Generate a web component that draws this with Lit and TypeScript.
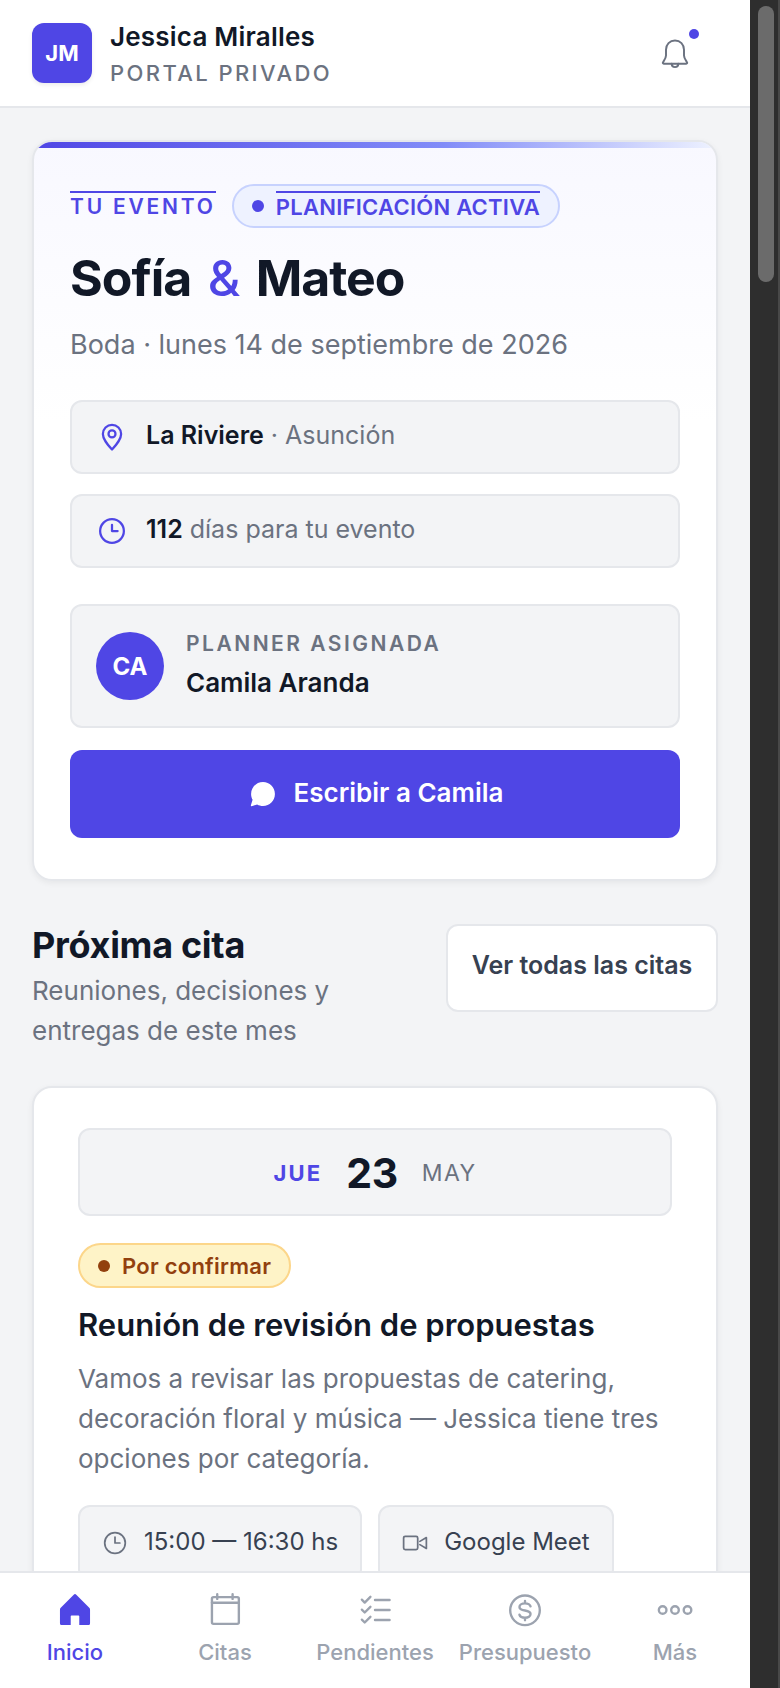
import { LitElement, html, css, svg } from "lit";
import { customElement } from "lit/decorators.js";

const icon = (cls: string, body: unknown) =>
  html`<svg class=${cls} viewBox="0 0 24 24" fill="none" stroke="currentColor" stroke-width="1.6" stroke-linecap="round" stroke-linejoin="round">${body}</svg>`;

const clock = svg`<circle cx="12" cy="12" r="9.500" stroke-width="1.800"/><path d="M12 7v5h4.500" stroke-width="1.800"/>`;
const pin = svg`<path d="M12 22C8 17.500 4.700 13.700 4.700 9.500a7.300 7.300 0 0 1 14.600 0c0 4.200-3.300 8-7.300 12.500z" stroke-width="1.800"/><circle cx="12" cy="9.500" r="2.800" stroke-width="1.800"/>`;

@customElement("app-root")
export class AppRoot extends LitElement {
  static styles = css`
    :host { display: block; width: 780px; height: 1688px; overflow: hidden; font-family: Inter, "Liberation Sans", sans-serif; color: #111827; }
    * { box-sizing: border-box; }
    .window { display: flex; height: 1688px; }
    .page { width: 750px; display: flex; flex-direction: column; background: #f3f4f6; height: 100%; }
    .bar { width: 30px; background: #2e2e2e; padding: 6px 4px 0 8px; border-right: 2px solid #484848; }
    .thumb { height: 276px; border-radius: 8px; background: #6b6b6b; }

    header { height: 108px; flex: none; background: #fff; border-bottom: 2px solid #e5e7eb; display: flex; align-items: center; padding: 0 32px; }
    .logo { width: 60px; height: 60px; border-radius: 12px; background: #4f46e5; color: #fff; font-size: 22px; font-weight: 700; display: flex; align-items: center; justify-content: center; box-shadow: 0 2px 4px rgba(0,0,0,.08); }
    .who { margin-left: 18px; flex: 1; padding-top: 1px; }
    .who b { display: block; font-size: 26px; font-weight: 600; line-height: 34px; letter-spacing: 0.2px; }
    .who span { display: block; font-size: 22px; font-weight: 500; color: #6b7280; letter-spacing: 2.400px; line-height: 30px; margin-top: 4px; }
    .bell { position: relative; width: 36px; height: 36px; color: #6b7280; margin-right: 25px; margin-top: 1px; }
    .bell svg { width: 36px; height: 36px; display: block; }
    .bell i { position: absolute; top: -7px; right: -6px; width: 10px; height: 10px; border-radius: 50%; background: #4f46e5; }

    main { flex: 1; min-height: 0; overflow: hidden; padding: 32px 32px 0; display: flex; flex-direction: column; }
    .hero { flex: none; position: relative; height: 741px; border: 2px solid #e5e7eb; border-radius: 20px; overflow: hidden; background: linear-gradient(180deg, #f8f8ff 0%, #ffffff 38%); padding: 42px 36px 40px; box-shadow: 0 2px 6px rgba(0,0,0,.06); }
    .hero::before { content: ""; position: absolute; left: 0; right: 0; top: 0; height: 6px; background: linear-gradient(90deg, #4f46e5, #818cf8 60%, #eef2ff); }
    .tags { display: flex; align-items: center; gap: 16px; height: 44px; }
    .eyebrow { font-size: 21px; font-weight: 600; letter-spacing: 2.800px; color: #4f46e5; border-top: 2px solid #4f46e5; line-height: 27px; margin-bottom: 1px; }
    .pill { display: flex; align-items: center; gap: 12px; height: 44px; padding: 0 18px; border: 2px solid #c7d2fe; border-radius: 22px; background: #eef2ff; }
    .pill i { width: 12px; height: 12px; border-radius: 50%; background: #4f46e5; }
    .pill span { font-size: 22px; font-weight: 600; color: #4f46e5; border-top: 2px solid #4f46e5; line-height: 28px; letter-spacing: 0.26px; }
    h1 { margin: 20px 0 0; font-size: 50px; line-height: 60px; font-weight: 700; letter-spacing: -1px; }
    h1 em { font-style: normal; font-weight: 500; color: #4f46e5; margin: 0 5.500px; }
    .sub { margin: 19px 0 0; font-size: 27px; line-height: 36px; color: #6b7280; }
    .info { height: 74px; margin-top: 20px; border: 2px solid #e5e7eb; border-radius: 12px; background: #f3f4f6; display: flex; align-items: center; padding-left: 25px; gap: 19px; font-size: 25px; color: #6b7280; }
    .info span { margin-top: -5px; }
    .info.first { margin-top: 37px; }
    .info b { color: #111827; font-weight: 600; }
    .i30 { width: 30px; height: 30px; color: #4f46e5; flex: none; }
    .planner { height: 124px; margin-top: 36px; border: 2px solid #e5e7eb; border-radius: 12px; background: #f3f4f6; display: flex; align-items: center; padding-left: 24px; gap: 22px; }
    .ca { width: 68px; height: 68px; border-radius: 50%; background: #4f46e5; color: #fff; display: flex; align-items: center; justify-content: center; font-size: 24px; font-weight: 700; }
    .planner small { display: block; font-size: 21px; font-weight: 600; letter-spacing: 2.500px; color: #6b7280; line-height: 28px; margin-top: -2px; }
    .planner strong { display: block; font-size: 26px; font-weight: 600; line-height: 34px; margin-top: 8px; }
    .cta { height: 88px; margin-top: 22px; border-radius: 12px; background: #4f46e5; color: #fff; display: flex; align-items: center; justify-content: center; gap: 18px; font-size: 26px; font-weight: 600; padding: 0 0 4px 3px; }
    .cta svg { width: 26px; height: 26px; margin-top: 4px; }

    .section { flex: none; display: flex; justify-content: space-between; align-items: flex-start; margin-top: 43px; }
    h2 { margin: -1px 0 0; font-size: 36px; line-height: 44px; font-weight: 700; letter-spacing: -0.3px; }
    .section p { margin: 4px 0 0; width: 340px; font-size: 26px; line-height: 40px; color: #6b7280; }
    .all { width: 272px; height: 88px; border: 2px solid #e5e7eb; border-radius: 12px; background: #fff; display: flex; align-items: center; justify-content: center; font-size: 25px; font-weight: 600; color: #374151; padding-bottom: 6px; }

    .event { flex: none; margin-top: 35px; border: 2px solid #e5e7eb; border-radius: 20px; background: #fff; padding: 40px 44px; box-shadow: 0 2px 6px rgba(0,0,0,.06); }
    .date { height: 88px; border: 2px solid #e5e7eb; border-radius: 12px; background: #f3f4f6; display: flex; align-items: center; justify-content: center; gap: 24px; padding-top: 1px; }
    .date .d { font-size: 22px; font-weight: 700; letter-spacing: 2.200px; color: #4f46e5; }
    .date .n { font-size: 41px; font-weight: 700; letter-spacing: -0.4px; }
    .date .m { font-size: 23px; letter-spacing: 1.400px; color: #6b7280; }
    .warn { display: inline-flex; align-items: center; gap: 12px; height: 45px; margin-top: 27px; padding: 0 18px; border: 2px solid #fcd68a; border-radius: 23px; background: #fef3c7; color: #92400e; font-size: 22px; font-weight: 600; letter-spacing: 0.25px; }
    .warn i { width: 12px; height: 12px; border-radius: 50%; background: #92400e; }
    h3 { margin: 17px 0 0; font-size: 31px; line-height: 40px; font-weight: 600; }
    .desc { margin: 14px 0 0; font-size: 26px; line-height: 40px; color: #6b7280; }
    .chips { display: flex; gap: 16px; margin-top: 26px; }
    .chip { height: 76px; border: 2px solid #e5e7eb; border-radius: 12px; background: #f3f4f6; display: flex; align-items: center; gap: 16px; padding: 0 22px; font-size: 24px; color: #374151; }
    .chip span { margin-top: -3px; }
    .chip svg { width: 26px; height: 26px; color: #6b7280; overflow: visible; }

    nav { height: 117px; flex: none; background: #fff; border-top: 2px solid #e5e7eb; display: grid; grid-template-columns: repeat(5, 150px); position: relative; z-index: 1; }
    .tab { display: flex; flex-direction: column; align-items: center; padding-top: 18px; color: #9ca3af; font-size: 22px; font-weight: 500; }
    .tab svg { width: 38px; height: 38px; }
    .tab span { margin-top: 8px; line-height: 30px; }
    .tab.on { color: #4f46e5; }
  `;

  render() {
    return html`<div class="window">
      <div class="page">
        <header>
          <div class="logo">JM</div>
          <div class="who"><b>Jessica Miralles</b><span>PORTAL PRIVADO</span></div>
          <div class="bell">
            ${icon("", svg`<path d="M12 3c-3.500 0-6 2.600-6 6.200v3.800c0 1.800-1 3-2 4.500-.3.400-.1 1 .5 1h15c.6 0 .8-.6.5-1-1-1.500-2-2.700-2-4.500V9.200C18 5.600 15.500 3 12 3z" stroke-width="1.300"/><path d="M9.800 18.500c0 3 4.400 3 4.400 0" stroke-width="1.300"/>`)}
            <i></i>
          </div>
        </header>
        <main>
          <section class="hero">
            <div class="tags">
              <span class="eyebrow">TU EVENTO</span>
              <div class="pill"><i></i><span>PLANIFICACIÓN ACTIVA</span></div>
            </div>
            <h1>Sofía <em>&amp;</em> Mateo</h1>
            <p class="sub">Boda · lunes 14 de septiembre de 2026</p>
            <div class="info first">${icon("i30", pin)}<span><b>La Riviere</b> · Asunción</span></div>
            <div class="info">${icon("i30", clock)}<span><b>112</b> días para tu evento</span></div>
            <div class="planner">
              <div class="ca">CA</div>
              <div><small>PLANNER ASIGNADA</small><strong>Camila Aranda</strong></div>
            </div>
            <div class="cta">
              <svg viewBox="0 0 24 24" fill="currentColor"><path d="M12 1C5.900 1 1 5.900 1 12c0 2 .5 3.800 1.400 5.400L.8 22.400c-.2.500.3 1 .8.800l5-1.600C8.200 22.500 10 23 12 23c6.100 0 11-4.900 11-11S18.100 1 12 1z"/></svg>
              Escribir a Camila
            </div>
          </section>
          <div class="section">
            <div><h2>Próxima cita</h2><p>Reuniones, decisiones y entregas de este mes</p></div>
            <div class="all">Ver todas las citas</div>
          </div>
          <section class="event">
            <div class="date"><span class="d">JUE</span><span class="n">23</span><span class="m">MAY</span></div>
            <div class="warn"><i></i>Por confirmar</div>
            <h3>Reunión de revisión de propuestas</h3>
            <p class="desc">Vamos a revisar las propuestas de catering, decoración floral y música — Jessica tiene tres opciones por categoría.</p>
            <div class="chips">
              <div class="chip">${icon("", svg`<circle cx="12" cy="12" r="9.500"/><path d="M12 6.500V12h4.500"/>`)}<span>15:00 — 16:30 hs</span></div>
              <div class="chip">${icon("", svg`<rect x="1.500" y="5.800" width="13" height="12.400" rx="1.500"/><path d="M16.500 10.500L22.500 7v10l-6-3.500"/>`)}<span>Google Meet</span></div>
            </div>
          </section>
        </main>
        <nav>
          <div class="tab on"><svg viewBox="0 0 24 24" fill="currentColor"><path d="M11.200 2.300a1.100 1.100 0 0 1 1.600 0l8.200 8.200c.3.300.5.700.5 1.100v8.900a1 1 0 0 1-1 1h-5.800v-5.500a.5.500 0 0 0-.5-.5h-4.400a.5.500 0 0 0-.5.500v5.500H3.500a1 1 0 0 1-1-1v-8.900c0-.4.200-.8.500-1.100z"/></svg><span>Inicio</span></div>
          <div class="tab">${icon("", svg`<rect x="3.750" y="3.900" width="17" height="16.850" rx="1" stroke-width="1.500"/><path d="M3.750 7.400h17M7.100 2v3M16.800 2v3" stroke-width="1.500"/>`)}<span>Citas</span></div>
          <div class="tab">${icon("", svg`<path d="M12 5.700h9.200M12 12h9.200M12 18.300h9.200" stroke-width="1.500"/><path d="M3.700 5.500l1.800 1.800 3.600-3.600M3.700 11.800l1.800 1.800 3.600-3.600M3.700 18.100l1.800 1.800 3.600-3.600" stroke-width="1.500"/>`)}<span>Pendientes</span></div>
          <div class="tab">${icon("", svg`<circle cx="12" cy="12.200" r="9.350" stroke-width="1.500"/><path d="M15.500 9.700c-.4-1.200-1.700-1.900-3.500-1.900-2.100 0-3.500 1-3.500 2.300 0 1.500 1.500 1.900 3.500 2.200s3.500.8 3.500 2.300c0 1.300-1.400 2.300-3.500 2.300-1.800 0-3.100-.7-3.500-1.900M12 6.300v1.500M12 16.900v1.500" stroke-width="1.500"/>`)}<span>Presupuesto</span></div>
          <div class="tab">${icon("", svg`<circle cx="4.200" cy="12" r="2.400" stroke-width="1.500"/><circle cx="12" cy="12" r="2.400" stroke-width="1.500"/><circle cx="19.900" cy="12" r="2.400" stroke-width="1.500"/>`)}<span>Más</span></div>
        </nav>
      </div>
      <div class="bar"><div class="thumb"></div></div>
    </div>`;
  }
}
